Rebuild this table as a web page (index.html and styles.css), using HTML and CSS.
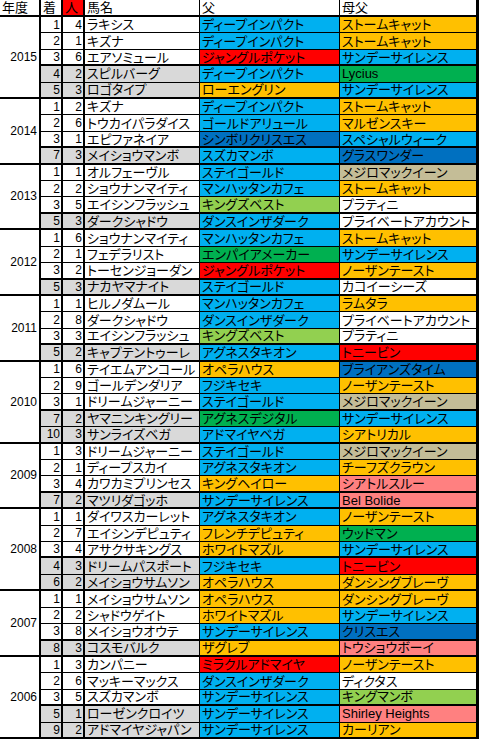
FILE: index.html
```html
<!DOCTYPE html>
<html lang="ja">
<head>
<meta charset="utf-8">
<title>成績表</title>
<link rel="stylesheet" href="styles.css">
</head>
<body>
<div class="sheet">
  <div class="row head"><div class="yh">年度</div><div class="nh">着</div><div class="nh red">人</div><div class="nm">馬名</div><div class="sr">父</div><div class="bm">母父</div></div>

  <div class="row"><div class="yr span5">2015</div><div class="n">1</div><div class="n">4</div><div class="nm">ラキシス</div><div class="sr b">ディープインパクト</div><div class="bm o">ストームキャット</div></div>
  <div class="row"><div class="n">2</div><div class="n">1</div><div class="nm">キズナ</div><div class="sr b">ディープインパクト</div><div class="bm o">ストームキャット</div></div>
  <div class="row sep"><div class="n">3</div><div class="n">6</div><div class="nm">エアソミュール</div><div class="sr r">ジャングルポケット</div><div class="bm b">サンデーサイレンス</div></div>
  <div class="row gy"><div class="n">4</div><div class="n">2</div><div class="nm">スピルバーグ</div><div class="sr b">ディープインパクト</div><div class="bm g">Lycius</div></div>
  <div class="row gy end"><div class="n">5</div><div class="n">3</div><div class="nm">ロゴタイプ</div><div class="sr o">ローエングリン</div><div class="bm b">サンデーサイレンス</div></div>

  <div class="row"><div class="yr span4">2014</div><div class="n">1</div><div class="n">2</div><div class="nm">キズナ</div><div class="sr b">ディープインパクト</div><div class="bm o">ストームキャット</div></div>
  <div class="row"><div class="n">2</div><div class="n">6</div><div class="nm">トウカイパラダイス</div><div class="sr b">ゴールドアリュール</div><div class="bm o">マルゼンスキー</div></div>
  <div class="row sep"><div class="n">3</div><div class="n">1</div><div class="nm">エピファネイア</div><div class="sr d">シンボリクリスエス</div><div class="bm b">スペシャルウィーク</div></div>
  <div class="row gy end"><div class="n">7</div><div class="n">3</div><div class="nm">メイショウマンボ</div><div class="sr b">スズカマンボ</div><div class="bm d">グラスワンダー</div></div>

  <div class="row"><div class="yr span4">2013</div><div class="n">1</div><div class="n">1</div><div class="nm">オルフェーヴル</div><div class="sr b">ステイゴールド</div><div class="bm t">メジロマックイーン</div></div>
  <div class="row"><div class="n">2</div><div class="n">2</div><div class="nm">ショウナンマイティ</div><div class="sr b">マンハッタンカフェ</div><div class="bm o">ストームキャット</div></div>
  <div class="row sep"><div class="n">3</div><div class="n">5</div><div class="nm">エイシンフラッシュ</div><div class="sr l">キングズベスト</div><div class="bm">プラティニ</div></div>
  <div class="row gy end"><div class="n">5</div><div class="n">3</div><div class="nm">ダークシャドウ</div><div class="sr b">ダンスインザダーク</div><div class="bm">プライベートアカウント</div></div>

  <div class="row"><div class="yr span4">2012</div><div class="n">1</div><div class="n">6</div><div class="nm">ショウナンマイティ</div><div class="sr b">マンハッタンカフェ</div><div class="bm o">ストームキャット</div></div>
  <div class="row"><div class="n">2</div><div class="n">1</div><div class="nm">フェデラリスト</div><div class="sr g">エンパイアメーカー</div><div class="bm b">サンデーサイレンス</div></div>
  <div class="row sep"><div class="n">3</div><div class="n">2</div><div class="nm">トーセンジョーダン</div><div class="sr r">ジャングルポケット</div><div class="bm o">ノーザンテースト</div></div>
  <div class="row gy end"><div class="n">5</div><div class="n">3</div><div class="nm">ナカヤマナイト</div><div class="sr b">ステイゴールド</div><div class="bm">カコイーシーズ</div></div>

  <div class="row"><div class="yr span4">2011</div><div class="n">1</div><div class="n">1</div><div class="nm">ヒルノダムール</div><div class="sr b">マンハッタンカフェ</div><div class="bm o">ラムタラ</div></div>
  <div class="row"><div class="n">2</div><div class="n">8</div><div class="nm">ダークシャドウ</div><div class="sr b">ダンスインザダーク</div><div class="bm">プライベートアカウント</div></div>
  <div class="row sep"><div class="n">3</div><div class="n">3</div><div class="nm">エイシンフラッシュ</div><div class="sr l">キングズベスト</div><div class="bm">プラティニ</div></div>
  <div class="row gy end"><div class="n">5</div><div class="n">2</div><div class="nm">キャプテントゥーレ</div><div class="sr b">アグネスタキオン</div><div class="bm r">トニービン</div></div>

  <div class="row"><div class="yr span5">2010</div><div class="n">1</div><div class="n">6</div><div class="nm">テイエムアンコール</div><div class="sr o">オペラハウス</div><div class="bm d">ブライアンズタイム</div></div>
  <div class="row"><div class="n">2</div><div class="n">9</div><div class="nm">ゴールデンダリア</div><div class="sr b">フジキセキ</div><div class="bm o">ノーザンテースト</div></div>
  <div class="row sep"><div class="n">3</div><div class="n">1</div><div class="nm">ドリームジャーニー</div><div class="sr b">ステイゴールド</div><div class="bm t">メジロマックイーン</div></div>
  <div class="row gy"><div class="n">7</div><div class="n">2</div><div class="nm">ヤマニンキングリー</div><div class="sr g">アグネスデジタル</div><div class="bm b">サンデーサイレンス</div></div>
  <div class="row gy end"><div class="n">10</div><div class="n">3</div><div class="nm">サンライズベガ</div><div class="sr b">アドマイヤベガ</div><div class="bm o">シアトリカル</div></div>

  <div class="row"><div class="yr span4">2009</div><div class="n">1</div><div class="n">3</div><div class="nm">ドリームジャーニー</div><div class="sr b">ステイゴールド</div><div class="bm t">メジロマックイーン</div></div>
  <div class="row"><div class="n">2</div><div class="n">1</div><div class="nm">ディープスカイ</div><div class="sr b">アグネスタキオン</div><div class="bm o">チーフズクラウン</div></div>
  <div class="row sep"><div class="n">3</div><div class="n">4</div><div class="nm">カワカミプリンセス</div><div class="sr o">キングヘイロー</div><div class="bm p">シアトルスルー</div></div>
  <div class="row gy end"><div class="n">7</div><div class="n">2</div><div class="nm">マツリダゴッホ</div><div class="sr b">サンデーサイレンス</div><div class="bm p">Bel Bolide</div></div>

  <div class="row"><div class="yr span5">2008</div><div class="n">1</div><div class="n">1</div><div class="nm">ダイワスカーレット</div><div class="sr b">アグネスタキオン</div><div class="bm o">ノーザンテースト</div></div>
  <div class="row"><div class="n">2</div><div class="n">7</div><div class="nm">エイシンデピュティ</div><div class="sr o">フレンチデピュティ</div><div class="bm g">ウッドマン</div></div>
  <div class="row sep"><div class="n">3</div><div class="n">4</div><div class="nm">アサクサキングス</div><div class="sr o">ホワイトマズル</div><div class="bm b">サンデーサイレンス</div></div>
  <div class="row gy"><div class="n">4</div><div class="n">3</div><div class="nm">ドリームパスポート</div><div class="sr b">フジキセキ</div><div class="bm r">トニービン</div></div>
  <div class="row gy end"><div class="n">6</div><div class="n">2</div><div class="nm">メイショウサムソン</div><div class="sr o">オペラハウス</div><div class="bm o">ダンシングブレーヴ</div></div>

  <div class="row"><div class="yr span4">2007</div><div class="n">1</div><div class="n">1</div><div class="nm">メイショウサムソン</div><div class="sr o">オペラハウス</div><div class="bm o">ダンシングブレーヴ</div></div>
  <div class="row"><div class="n">2</div><div class="n">2</div><div class="nm">シャドウゲイト</div><div class="sr o">ホワイトマズル</div><div class="bm b">サンデーサイレンス</div></div>
  <div class="row sep"><div class="n">3</div><div class="n">8</div><div class="nm">メイショウオウテ</div><div class="sr b">サンデーサイレンス</div><div class="bm d">クリスエス</div></div>
  <div class="row gy end"><div class="n">8</div><div class="n">3</div><div class="nm">コスモバルク</div><div class="sr o">ザグレブ</div><div class="bm p">トウショウボーイ</div></div>

  <div class="row"><div class="yr span5">2006</div><div class="n">1</div><div class="n">3</div><div class="nm">カンパニー</div><div class="sr r">ミラクルアドマイヤ</div><div class="bm o">ノーザンテースト</div></div>
  <div class="row"><div class="n">2</div><div class="n">6</div><div class="nm">マッキーマックス</div><div class="sr b">ダンスインザダーク</div><div class="bm">ディクタス</div></div>
  <div class="row sep"><div class="n">3</div><div class="n">5</div><div class="nm">スズカマンボ</div><div class="sr b">サンデーサイレンス</div><div class="bm l">キングマンボ</div></div>
  <div class="row gy"><div class="n">5</div><div class="n">1</div><div class="nm">ローゼンクロイツ</div><div class="sr b">サンデーサイレンス</div><div class="bm p">Shirley Heights</div></div>
  <div class="row gy end"><div class="n">9</div><div class="n">2</div><div class="nm">アドマイヤジャパン</div><div class="sr b">サンデーサイレンス</div><div class="bm o">カーリアン</div></div>
</div>
</body>
</html>
```
FILE: styles.css
```css
html, body {
  margin: 0;
  background: #fff;
}

.sheet {
  display: grid;
  grid-template-columns: 41px 22px 22px 115px 140px 139px;
  grid-template-rows: 17px repeat(44, 1fr);
  width: 479px;
  height: 739px;
  font-family: "Liberation Sans", "Noto Sans CJK JP", sans-serif;
  font-size: 13px;
  font-feature-settings: "palt";
  color: #000;
}

.row {
  display: contents;
}

.row > div {
  box-sizing: border-box;
  display: flex;
  align-items: center;
  padding: 0 2px;
  border-bottom: 1px solid #000;
  white-space: nowrap;
  overflow: hidden;
  line-height: 1;
  background: #fff;
}

.head > div {
  border-bottom-width: 2px;
}

.row.sep > div,
.row.end > div {
  border-bottom-width: 2px;
}

.yh,
.yr {
  border-right: 2px solid #000;
}

.yr {
  grid-column: 1;
  justify-content: flex-end;
  font-size: 12px;
  padding-right: 2px;
  border-bottom-width: 2px !important;
}

.span4 { grid-row: span 4; }
.span5 { grid-row: span 5; }

.nh {
  border-right: 2px solid #000;
}

.n {
  border-right: 2px solid #000;
  justify-content: flex-end;
  font-size: 12px;
}

.row > .n { padding-right: 1px; }

.nm,
.sr {
  border-right: 1px solid #000;
}

.bm {
  border-right: 3px solid #000;
}

.gy > .n,
.gy > .nm {
  background: #d9d9d9;
}

.red { background: #ff0000 !important; }
.row > .b { background: #00b0f0; }
.row > .o { background: #ffc000; }
.row > .r { background: #ff0000; }
.row > .g { background: #00b050; }
.row > .d { background: #0070c0; }
.row > .l { background: #92d050; }
.row > .t { background: #c4bd97; }
.row > .p { background: #ff8080; }
```
